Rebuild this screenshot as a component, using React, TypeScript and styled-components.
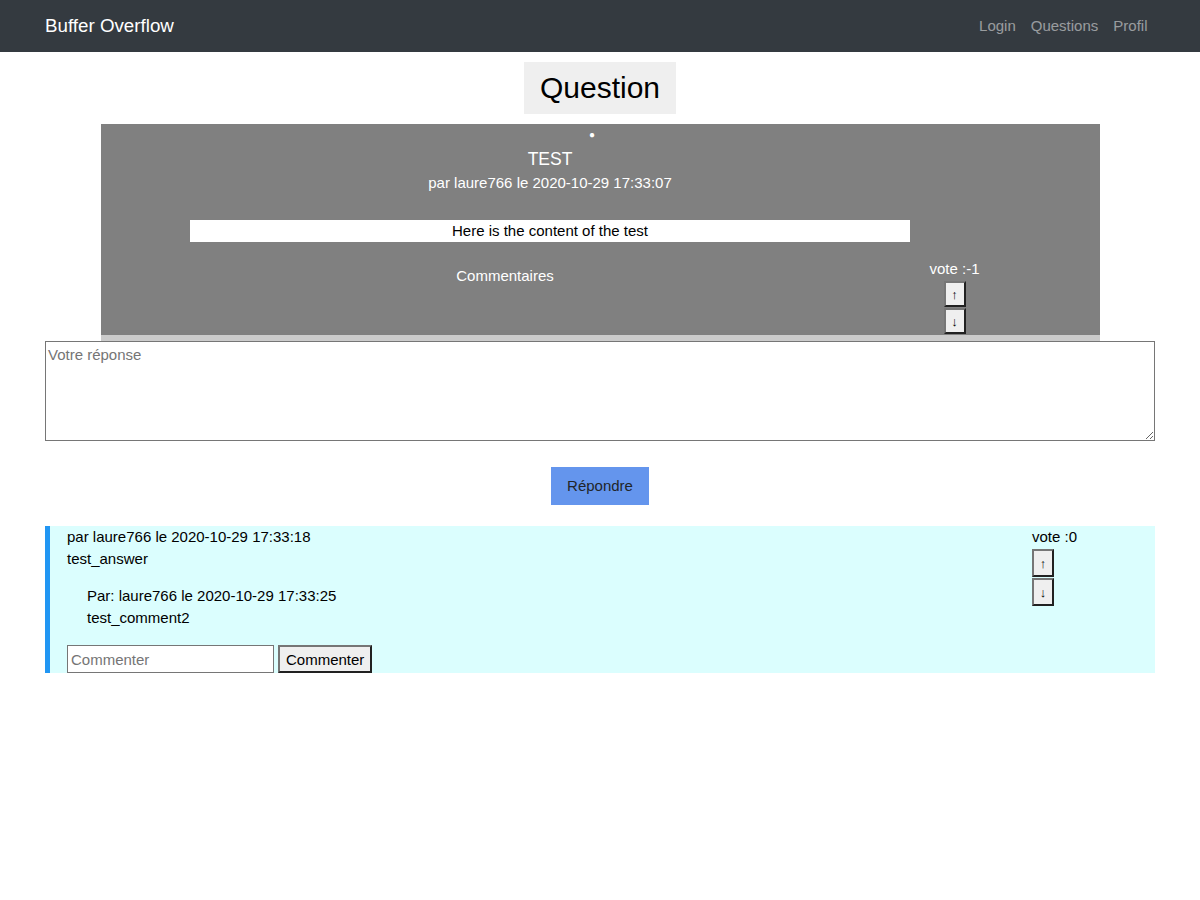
import React from "react";
import styled, { createGlobalStyle } from "styled-components";

const GlobalStyle = createGlobalStyle`
  html { font-size: 15px; }
  body {
    margin: 0;
    font-family: "Liberation Sans", Arial, sans-serif;
    font-size: 15px;
    line-height: 1.5;
    color: #212529;
    background: #fff;
  }
  * { box-sizing: border-box; }
`;

const Navbar = styled.nav`
  height: 52px;
  background: #343a40;
  display: flex;
  align-items: center;
  justify-content: space-between;
  padding: 0 45px;
`;

const Brand = styled.a`
  color: #fff;
  font-size: 18.75px;
  line-height: 1.5;
  text-decoration: none;
`;

const NavLinks = styled.div`
  display: flex;
`;

const NavLink = styled.a`
  color: rgba(255, 255, 255, 0.5);
  padding: 0 7.5px;
  text-decoration: none;
  font-size: 15px;
`;

const Main = styled.main`
  width: 1110px;
  margin: 0 auto;
  display: flex;
  flex-direction: column;
  align-items: center;
`;

const Title = styled.h1`
  margin: 10px 0;
  height: 52px;
  padding: 0 16px;
  background: #efefef;
  color: #000;
  font-size: 30px;
  font-weight: 400;
  line-height: 52px;
`;

const QuestionCard = styled.section`
  width: 999px;
  background: #808080;
  color: #fff;
  border-bottom: 6px solid #cbcbcb;
  padding-right: 100px;
`;

const Bullet = styled.div`
  height: 22px;
  text-align: center;
  padding-left: 84px;
  font-size: 10px;
  line-height: 22px;
`;

const QTitle = styled.h2`
  margin: 0;
  text-align: center;
  font-size: 17.5px;
  font-weight: 400;
  line-height: 26px;
`;

const Meta = styled.div`
  text-align: center;
  line-height: 22px;
`;

const Content = styled.div`
  width: 720px;
  margin: 26px auto 0;
  background: #fff;
  color: #000;
  text-align: center;
  line-height: 22px;
`;

const BottomRow = styled.div`
  display: flex;
  margin-top: 16px;
`;

const Comments = styled.div`
  width: 809px;
  text-align: center;
  padding-top: 7px;
  line-height: 22px;
`;

const VoteCol = styled.div<{ $align?: string; $width: number; $pad?: number }>`
  width: ${(p) => p.$width}px;
  display: flex;
  flex-direction: column;
  align-items: ${(p) => p.$align || "center"};
  padding-bottom: ${(p) => p.$pad || 0}px;
  line-height: 22px;
`;

const VoteBtn = styled.button<{ $h: number; $gap?: number }>`
  width: 22px;
  height: ${(p) => p.$h}px;
  margin-top: ${(p) => p.$gap || 0}px;
  padding: 0;
  background: #efefef;
  border: 2px outset #767676;
  font-family: "Liberation Sans", Arial, sans-serif;
  font-size: 13px;
  color: #000;
  line-height: 1;
`;

const Answer = styled.textarea`
  display: block;
  width: 1110px;
  height: 100px;
  margin: 0;
  padding: 4px 2px;
  border: 1px solid #767676;
  font-family: "Liberation Sans", Arial, sans-serif;
  font-size: 15px;
  line-height: 1.2;
  &::placeholder { color: #757575; }
`;

const SubmitButton = styled.button`
  margin: 26px 0 21px;
  height: 38px;
  padding: 0 16px 1px;
  border: none;
  background: #6495ed;
  color: #212529;
  font-family: "Liberation Sans", Arial, sans-serif;
  font-size: 15px;
`;

const AnswerCard = styled.article`
  width: 1110px;
  display: flex;
  background: #dbfefe;
  border-left: 5px solid #2196f3;
  padding-left: 17px;
  color: #000;
  line-height: 22px;
`;

const AnswerBody = styled.div`
  flex: 1;
`;

const Comment = styled.div`
  margin: 15px 0 16px 20px;
`;

const CommentForm = styled.form`
  display: flex;
  gap: 4px;
`;

const CommentInput = styled.input`
  width: 207px;
  height: 28px;
  padding: 1px 3px;
  border: 1px solid #767676;
  font-family: "Liberation Sans", Arial, sans-serif;
  font-size: 15px;
  &::placeholder { color: #757575; }
`;

const CommentButton = styled.button`
  height: 28px;
  padding: 0 6px;
  background: #efefef;
  border: 2px outset #767676;
  font-family: "Liberation Sans", Arial, sans-serif;
  font-size: 15px;
  color: #000;
`;

export default function App() {
  return (
    <>
      <GlobalStyle />
      <Navbar>
        <Brand href="#">Buffer Overflow</Brand>
        <NavLinks>
          <NavLink href="#">Login</NavLink>
          <NavLink href="#">Questions</NavLink>
          <NavLink href="#">Profil</NavLink>
        </NavLinks>
      </Navbar>
      <Main>
        <Title>Question</Title>
        <QuestionCard>
          <Bullet>●</Bullet>
          <QTitle>TEST</QTitle>
          <Meta>par laure766 le 2020-10-29 17:33:07</Meta>
          <Content>Here is the content of the test</Content>
          <BottomRow>
            <Comments>Commentaires</Comments>
            <VoteCol $width={90} $pad={1}>
              vote :-1
              <VoteBtn $h={26} $gap={1}>↑</VoteBtn>
              <VoteBtn $h={26} $gap={1}>↓</VoteBtn>
            </VoteCol>
          </BottomRow>
        </QuestionCard>
        <Answer placeholder="Votre réponse" />
        <SubmitButton>Répondre</SubmitButton>
        <AnswerCard>
          <AnswerBody>
            <div>par laure766 le 2020-10-29 17:33:18</div>
            <div>test_answer</div>
            <Comment>
              <div>Par: laure766 le 2020-10-29 17:33:25</div>
              <div>test_comment2</div>
            </Comment>
            <CommentForm onSubmit={(e) => e.preventDefault()}>
              <CommentInput placeholder="Commenter" />
              <CommentButton>Commenter</CommentButton>
            </CommentForm>
          </AnswerBody>
          <VoteCol $width={123} $align="flex-start">
            vote :0
            <VoteBtn $h={28} $gap={1}>↑</VoteBtn>
            <VoteBtn $h={28} $gap={1}>↓</VoteBtn>
          </VoteCol>
        </AnswerCard>
      </Main>
    </>
  );
}
